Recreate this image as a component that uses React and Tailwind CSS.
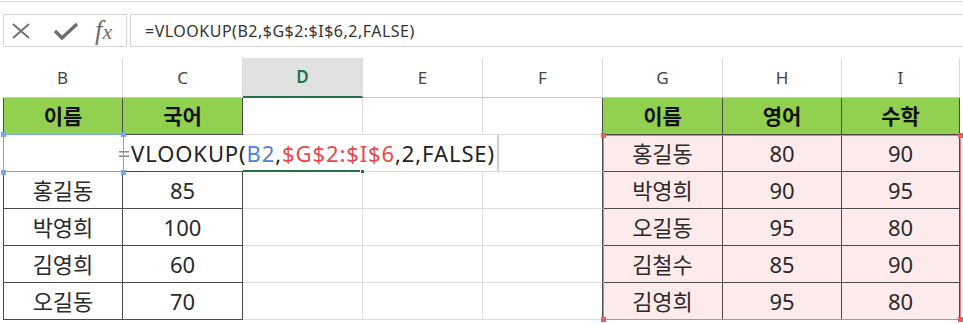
import React from 'react';

const COLS = ['B', 'C', 'D', 'E', 'F', 'G', 'H', 'I'];
const WIDTHS = ['w-[120px]', 'w-[120px]', 'w-[120px]', 'w-[120px]', 'w-[120px]', 'w-[120px]', 'w-[119px]', 'w-[118px]'];

const font = "font-['Noto_Sans','Noto_Sans_CJK_KR',sans-serif]";

// 시트 데이터 (행 2는 편집 중인 셀이 덮음)
const rows = [
  ['이름', '국어', '', '', '', '이름', '영어', '수학'],
  ['', '', '', '', '', '홍길동', '80', '90'],
  ['홍길동', '85', '', '', '', '박영희', '90', '95'],
  ['박영희', '100', '', '', '', '오길동', '95', '80'],
  ['김영희', '60', '', '', '', '김철수', '85', '90'],
  ['오길동', '70', '', '', '', '김영희', '95', '80'],
];

const inTable = (c) => c <= 1 || c >= 5;

function Cell({ r, c, text }) {
  const green = r === 0 && inTable(c);
  const pink = r > 0 && c >= 5;
  const darkRight = inTable(c) || c === 4;
  const darkBottom = inTable(c);
  return (
    <div
      className={[
        'h-[37px] flex items-center justify-center border-r border-b leading-none',
        WIDTHS[c],
        c === 0 ? 'border-l border-l-[#4a4a4a]' : '',
        darkRight ? 'border-r-[#4a4a4a]' : 'border-r-[#dcdcdc]',
        darkBottom ? 'border-b-[#4a4a4a]' : 'border-b-[#dcdcdc]',
        green
          ? 'bg-[#92d050] font-bold text-[21px] text-[#111]'
          : pink
          ? 'bg-[#fdebeb] text-[22px] text-[#2a2a2a]'
          : 'bg-white text-[22px] text-[#2a2a2a]',
      ].join(' ')}
    >
      {text}
    </div>
  );
}

function Corner({ className }) {
  return <div className={`absolute w-[5px] h-[5px] ${className}`} />;
}

export default function App() {
  return (
    <div className={`w-[963px] h-[324px] bg-white overflow-hidden ${font}`}>
      <div className="h-px mt-px bg-[#d8d8d8]" />

      {/* 수식 입력줄 */}
      <div className="flex mt-[12px] h-[33px]">
        <div className="ml-[3px] w-[124px] border border-[#d6d6d6] flex items-center text-[#6e6e6e]">
          <svg width="20" height="16" viewBox="0 0 20 16" className="ml-[7px]">
            <path d="M2 1 L18 15 M18 1 L2 15" stroke="#6e6e6e" strokeWidth="1.8" fill="none" />
          </svg>
          <svg width="26" height="18" viewBox="0 0 26 18" className="ml-[22px]">
            <path d="M2 9 L9 16 L24 2" stroke="#6e6e6e" strokeWidth="3.4" fill="none" />
          </svg>
          <span className="ml-[16px] font-['Liberation_Serif',serif] italic text-[27px] leading-none">
            f<span className="text-[22px]">x</span>
          </span>
        </div>
        <div className="ml-[3px] flex-1 border border-r-0 border-[#d6d6d6] flex items-center pl-[14px] text-[16px] tracking-[0.5px] text-[#333]">
          =VLOOKUP(B2,$G$2:$I$6,2,FALSE)
        </div>
      </div>

      {/* 시트 */}
      <div className="relative ml-[3px] mt-[11px]">
        <div className="flex">
          {COLS.map((col, c) => (
            <div
              key={col}
              className={`${WIDTHS[c]} h-[40px] flex items-center justify-center text-[17px] border-r border-[#dadada] ${
                col === 'D'
                  ? 'bg-[#e1e1e1] text-[#217346] font-semibold border-b-2 border-b-[#217346]'
                  : 'text-[#444] border-b border-b-[#c8c8c8]'
              }`}
            >
              {col}
            </div>
          ))}
        </div>
        {rows.map((row, r) => (
          <div key={r} className="flex">
            {row.map((t, c) => (
              <Cell key={c} r={r} c={c} text={t} />
            ))}
          </div>
        ))}

        {/* 편집 중인 셀 */}
        <div className="absolute left-0 top-[77px] w-[496px] h-[36px] bg-white border-r-2 border-[#cfcfcf] flex items-center justify-end pr-[2px] text-[22px] tracking-[0.9px] text-[#222] whitespace-nowrap">
          <span className="text-[#888]">=</span>VLOOKUP(
          <span className="text-[#4f81d9]">B2</span>,
          <span className="text-[#e8474a]">$G$2:$I$6</span>,2,FALSE)
        </div>

        {/* B2 참조 테두리 */}
        <div className="absolute left-0 top-[76px] w-[121px] h-[38px] border border-[#7aa5ec]" />
        <Corner className="left-[-2px] top-[74px] bg-[#7aa5ec]" />
        <Corner className="left-[118px] top-[74px] bg-[#7aa5ec]" />
        <Corner className="left-[-2px] top-[112px] bg-[#7aa5ec]" />
        <Corner className="left-[118px] top-[112px] bg-[#7aa5ec]" />

        {/* 활성 셀 D2 */}
        <div className="absolute left-[240px] top-[112px] w-[120px] h-[2px] bg-[#217346]" />
        <Corner className="left-[357px] top-[111px] bg-[#217346] border border-white" />

        {/* G2:I6 참조 테두리 */}
        <div className="absolute left-[600px] top-[77px] w-[358px] h-[185px] border border-[#ef7b7b]" />
        <Corner className="left-[598px] top-[75px] bg-[#ef5b5b]" />
        <Corner className="left-[955px] top-[75px] bg-[#ef5b5b]" />
        <Corner className="left-[598px] top-[259px] bg-[#ef5b5b]" />
        <Corner className="left-[955px] top-[259px] bg-[#ef5b5b]" />
      </div>
    </div>
  );
}
